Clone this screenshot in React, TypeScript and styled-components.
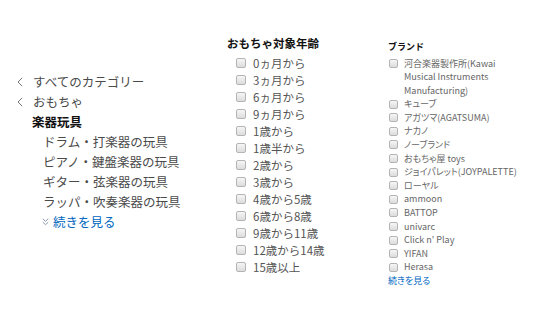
import React from "react";
import styled, { createGlobalStyle } from "styled-components";

const GlobalStyle = createGlobalStyle`
  html, body {
    margin: 0;
    padding: 0;
    background: #fff;
  }
  body {
    font-family: "Noto Sans CJK JP", "Noto Sans", sans-serif;
    color: #444;
  }
`;

const Page = styled.div`
  display: flex;
  align-items: flex-start;
  width: 560px;
  height: 315px;
  padding-left: 17px;
  box-sizing: border-box;
  overflow: hidden;
`;

const CategoryColumn = styled.ul`
  list-style: none;
  margin: 0;
  padding: 72px 0 0;
  width: 210px;
  font-size: 12.5px;
  line-height: 20px;
`;

const CategoryItem = styled.li<{ $indent: number; $bold?: boolean }>`
  display: flex;
  align-items: center;
  padding-left: ${(p) => p.$indent}px;
  color: ${(p) => (p.$bold ? "#111" : "#4a4a4a")};
  font-weight: ${(p) => (p.$bold ? 700 : 400)};
  white-space: nowrap;
`;

const BackIcon = styled.svg`
  width: 6px;
  height: 10px;
  margin-right: 10px;
  flex: none;
`;

const MoreLink = styled.a`
  display: flex;
  align-items: center;
  gap: 4px;
  color: #0066c0;
  text-decoration: none;
`;

const FilterColumn = styled.div<{ $width: number; $top: number }>`
  width: ${(p) => p.$width}px;
  padding-top: ${(p) => p.$top}px;
  flex: none;
`;

const FilterTitle = styled.div<{ $size: number; $line: number }>`
  font-size: ${(p) => p.$size}px;
  line-height: ${(p) => p.$line}px;
  font-weight: 700;
  color: #111;
  margin-bottom: 3.5px;
  white-space: nowrap;
`;

const OptionList = styled.ul<{
  $indent: number;
  $size: number;
  $line: number;
  $palt?: boolean;
}>`
  list-style: none;
  margin: 0;
  padding: 0 0 0 ${(p) => p.$indent}px;
  font-size: ${(p) => p.$size}px;
  line-height: ${(p) => p.$line}px;
  color: ${(p) => (p.$palt ? "#666" : "#555")};
  font-feature-settings: ${(p) => (p.$palt ? '"palt"' : "normal")};
`;

const Option = styled.li<{ $gap: number; $wrap?: boolean }>`
  display: flex;
  align-items: flex-start;
  gap: ${(p) => p.$gap}px;
  white-space: ${(p) => (p.$wrap ? "normal" : "nowrap")};
`;

const Box = styled.span<{ $size: number; $line: number }>`
  flex: none;
  width: ${(p) => p.$size}px;
  height: ${(p) => p.$size}px;
  margin-top: ${(p) => (p.$line - p.$size) / 2}px;
  box-sizing: border-box;
  border: 1px solid #b4b4b4;
  border-radius: 2px;
  background: linear-gradient(#f6f6f6, #dcdcdc);
`;

const OptionText = styled.span<{ $max?: number }>`
  max-width: ${(p) => (p.$max ? `${p.$max}px` : "none")};
`;

const SmallLink = styled.a`
  display: block;
  color: #0066c0;
  text-decoration: none;
  font-size: 9px;
  line-height: 13.6px;
  font-feature-settings: "palt";
`;

const ages = [
  "0ヵ月から",
  "3ヵ月から",
  "6ヵ月から",
  "9ヵ月から",
  "1歳から",
  "1歳半から",
  "2歳から",
  "3歳から",
  "4歳から5歳",
  "6歳から8歳",
  "9歳から11歳",
  "12歳から14歳",
  "15歳以上",
];

const brands = [
  "河合楽器製作所(Kawai Musical Instruments Manufacturing)",
  "キューブ",
  "アガツマ(AGATSUMA)",
  "ナカノ",
  "ノーブランド",
  "おもちゃ屋 toys",
  "ジョイパレット(JOYPALETTE)",
  "ローヤル",
  "ammoon",
  "BATTOP",
  "univarc",
  "Click n' Play",
  "YIFAN",
  "Herasa",
];

const subCategories = [
  "ドラム・打楽器の玩具",
  "ピアノ・鍵盤楽器の玩具",
  "ギター・弦楽器の玩具",
  "ラッパ・吹奏楽器の玩具",
];

function Back() {
  return (
    <BackIcon viewBox="0 0 6 10">
      <path d="M5.2 0.8 L1 5 L5.2 9.2" fill="none" stroke="#777" strokeWidth="1" />
    </BackIcon>
  );
}

function MoreIcon() {
  return (
    <svg width="7" height="8" viewBox="0 0 7 8">
      <path
        d="M0.8 0.8 L3.5 3.3 L6.2 0.8 M0.8 4.2 L3.5 6.7 L6.2 4.2"
        fill="none"
        stroke="#8a9bb0"
        strokeWidth="1"
      />
    </svg>
  );
}

export default function App() {
  return (
    <>
      <GlobalStyle />
      <Page>
        <CategoryColumn>
          <CategoryItem $indent={0}>
            <Back />
            すべてのカテゴリー
          </CategoryItem>
          <CategoryItem $indent={0}>
            <Back />
            おもちゃ
          </CategoryItem>
          <CategoryItem $indent={15} $bold>
            楽器玩具
          </CategoryItem>
          {subCategories.map((name) => (
            <CategoryItem key={name} $indent={26}>
              {name}
            </CategoryItem>
          ))}
          <CategoryItem $indent={25}>
            <MoreLink href="#">
              <MoreIcon />
              続きを見る
            </MoreLink>
          </CategoryItem>
        </CategoryColumn>

        <FilterColumn $width={161} $top={35}>
          <FilterTitle $size={11.5} $line={16}>
            おもちゃ対象年齢
          </FilterTitle>
          <OptionList $indent={9} $size={11.5} $line={17}>
            {ages.map((age) => (
              <Option key={age} $gap={7}>
                <Box $size={10} $line={17} />
                <OptionText>{age}</OptionText>
              </Option>
            ))}
          </OptionList>
        </FilterColumn>

        <FilterColumn $width={130} $top={40}>
          <FilterTitle $size={9} $line={13}>
            ブランド
          </FilterTitle>
          <OptionList $indent={1} $size={9} $line={13.6} $palt>
            {brands.map((brand, i) => (
              <Option key={brand} $gap={6} $wrap={i === 0}>
                <Box $size={9} $line={13.6} />
                <OptionText $max={i === 0 ? 98 : undefined}>{brand}</OptionText>
              </Option>
            ))}
          </OptionList>
          <SmallLink href="#">続きを見る</SmallLink>
        </FilterColumn>
      </Page>
    </>
  );
}
